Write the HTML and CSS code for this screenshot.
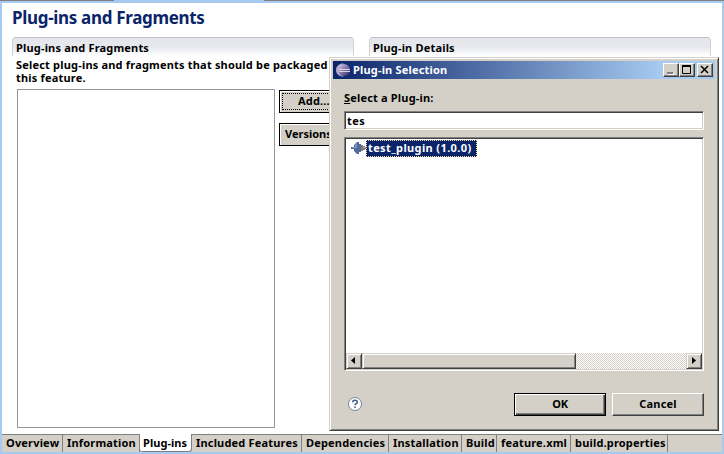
FILE: index.html
```html
<!DOCTYPE html>
<html lang="en">
<head>
<meta charset="utf-8">
<title>Plug-ins and Fragments</title>
<link rel="stylesheet" href="styles.css">
</head>
<body>
<div class="editor">
  <div class="top-edge"></div>
  <h1><span>Plug-ins and Fragments</span></h1>
  <main class="columns">
    <section class="left">
      <h2><span>Plug-ins and Fragments</span></h2>
      <p>Select plug-ins and fragments that should be packaged<br>this feature.</p>
      <div class="work">
        <div class="plugin-list"></div>
        <div class="actions">
          <button class="action focused"><span>Add...</span></button>
          <button class="action versions"><span>Versions...</span></button>
        </div>
      </div>
    </section>
    <section class="right"><h2><span class="details">Plug-in Details</span></h2></section>
  </main>
  <nav class="tabs">
    <div class="tab t1"><span>Overview</span></div>
    <div class="tab t2"><span>Information</span></div>
    <div class="tab t3 active"><span>Plug-ins</span></div>
    <div class="tab t4"><span>Included Features</span></div>
    <div class="tab t5"><span>Dependencies</span></div>
    <div class="tab t6"><span>Installation</span></div>
    <div class="tab t7"><span>Build</span></div>
    <div class="tab t8"><span>feature.xml</span></div>
    <div class="tab t9"><span>build.properties</span></div>
  </nav>
</div>
<div class="dialog">
  <header class="titlebar">
    <svg class="logo" width="16" height="16" viewBox="0 0 16 16">
      <defs><linearGradient id="orb" x1="0" y1="0" x2="1" y2="1"><stop offset="0" stop-color="#e0d9ed"/><stop offset=".4" stop-color="#9487b7"/><stop offset="1" stop-color="#302364"/></linearGradient></defs>
      <path d="M9 1.5C5 1 1 3.5 1 8s4 7 8 6.500C6 13 4 11 4 8s2-5 5-6.500Z" fill="#b7a8d2"/>
      <circle cx="9" cy="8" r="6" fill="url(#orb)"/>
      <path d="M4 7.500h11M4 9.500h11" stroke="#d9d3e8"/>
    </svg>
    <span class="title">Plug-in Selection</span>
    <div class="window-buttons">
      <span class="winbtn"><svg width="15" height="14"><path d="M4 9h6v2H4z" fill="#808080"/><path d="M5 11.500h6v-1.500" fill="none" stroke="#fff"/></svg></span>
      <span class="winbtn"><svg width="15" height="14"><path d="M3.500 3v7.500h8V3" fill="none" stroke="#000"/><path d="M3 3h9" stroke="#000" stroke-width="2"/></svg></span>
      <span class="winbtn close"><svg width="15" height="14"><path d="M4 3l7 7M11 3l-7 7" stroke="#000" stroke-width="1.500"/></svg></span>
    </div>
  </header>
  <div class="dialog-body">
    <div class="prompt"><span><u>S</u>elect a Plug-in:</span></div>
    <div class="field"><span>tes</span></div>
    <div class="results">
      <div class="result">
        <svg width="17" height="14" viewBox="0 0 17 14"><path d="M1 6h3V4l3-3h2v2h2v8H9v2H7L4 10V8H1Z" fill="#4f6b9b"/><path d="M2 6h3V4l2-2v5H2" fill="#7894bd"/><path d="M11 4h2v1h2v1h2v2h-2v1h-2v1h-2Z" fill="#827d70"/><path d="M13 6h3v1h-3z" fill="#bdad82"/></svg>
        <div class="selected"><span>test_plugin (1.0.0)</span></div>
      </div>
      <div class="scrollbar">
        <span class="arrow"><svg width="13" height="13"><path d="M8 2v7L4 5.500Z"/></svg></span>
        <span class="thumb"></span><span class="track"></span>
        <span class="arrow"><svg width="13" height="13"><path d="M5 2v7l4-3.500Z"/></svg></span>
      </div>
    </div>
    <footer>
      <svg class="help" width="16" height="16" viewBox="0 0 16 16"><circle cx="8" cy="8" r="6.500" fill="#fff" stroke="#7183a4"/><path d="M5.700 6.300C5.700 3.500 10.300 3.500 10.300 6.200 10.300 7.700 8 7.500 8 9.300M8 10.400v1.600" fill="none" stroke="#405784" stroke-width="1.500"/></svg>
      <button class="choice ok"><span>OK</span></button>
      <button class="choice cancel"><span>Cancel</span></button>
    </footer>
  </div>
</div>
</body>
</html>
```
FILE: styles.css
```css
* { box-sizing: border-box; }
body { margin: 0; width: 724px; height: 454px; overflow: hidden; position: relative; font: bold 11px/13px "Noto Sans", sans-serif; letter-spacing: .18px; color: #000; }
span { white-space: nowrap; }
button { font: inherit; letter-spacing: inherit; color: inherit; border-radius: 0; padding: 0; }
.editor { height: 454px; border: solid #a6caf0; border-width: 0 2px 2px; background: #fff; display: flex; flex-direction: column; }
.top-edge { height: 3px; flex: none; border-bottom: 2px solid #a6caf0; background: linear-gradient(90deg, #808080 114px, #a6caf0 114px 264px, #808080 264px); margin: 0 -2px; }
h1 { margin: 0; height: 34px; padding: 5px 0 0 10px; font-size: 17px; line-height: 20px; letter-spacing: -.32px; color: #0a246a; }
.columns { display: flex; gap: 15px; padding-left: 10px; height: 397px; }
.left, .right { width: 342px; }
h2 { margin: 0; height: 19px; border: 1px solid #d0d2d6; border-top-color: #bfc1c5; border-bottom: 0; border-radius: 4px 4px 0 0; background: linear-gradient(#e5e7ed 45%, #fff); padding: 2px 0 0 3px; font-size: 11px; line-height: 15px; }
p { margin: 2px 0 0 4px; height: 31px; line-height: 13px; white-space: nowrap; letter-spacing: .19px; }
.work { display: flex; gap: 4px; padding-left: 5px; }
.plugin-list { width: 258px; height: 339px; border: 1px solid #969696; }
.actions { display: flex; flex-direction: column; gap: 10px; padding-top: 1px; }
.action { width: 72px; height: 23px; border: 1px solid #000; background: #d4d0c8; box-shadow: inset 1px 1px #fff; text-align: left; padding: 0 0 2px 5px; }
.focused { outline: 1px dotted #000; outline-offset: -4px; padding-left: 18px; }
.versions { letter-spacing: 0; }
.tabs { display: flex; height: 18px; background: #d4d0c8; border-top: 1px solid #808080; }
.tab { border-right: 1px solid #808080; padding-left: 4px; line-height: 16px; }
.active { background: #fff; margin-top: -1px; height: 18px; line-height: 18px; border-bottom: 1px solid #808080; border-radius: 0 0 3px 3px; letter-spacing: .05px; }
.t1 { width: 61px } .t2 { width: 77px } .t3 { width: 52px; padding-left: 3px } .t4 { width: 110px } .t5 { width: 87px } .t6 { width: 73px } .t7 { width: 35px } .t8 { width: 74px } .t9 { width: 97px }
.dialog { position: absolute; left: 329px; top: 57px; width: 390px; height: 374px; background: #d4d0c8; border: 1px solid #d4d0c8; border-right-color: #404040; border-bottom-color: #404040; box-shadow: inset 1px 1px #fff, inset -1px -1px #808080; padding: 3px; }
.titlebar { height: 18px; display: flex; align-items: center; padding: 0 2px; background: linear-gradient(90deg, #0a246a, #a6caf0 86%); color: #fff; }
.title { margin: -2px 0 0 2px; }
.window-buttons { display: flex; margin-left: auto; }
.winbtn { width: 16px; height: 14px; background: #d4d0c8; border: 1px solid #fff; border-right-color: #404040; border-bottom-color: #404040; box-shadow: inset -1px -1px #808080; }
.winbtn svg { display: block; margin: -1px; }
.close { margin-left: 2px; }
.dialog-body { padding: 12px 11px; }
.prompt { height: 20px; line-height: 14px; }
.field, .results { border: 1px solid #808080; border-right-color: #fff; border-bottom-color: #fff; background: #fff; box-shadow: inset 1px 1px #404040, inset -1px -1px #d4d0c8; }
.field { height: 19px; padding: 1px 0 0 2px; line-height: 16px; letter-spacing: .4px; }
.results { height: 234px; margin-top: 7px; padding: 1px; display: flex; flex-direction: column; justify-content: space-between; }
.result { display: flex; padding-left: 4px; }
.result svg { margin-top: 2px; }
.selected { width: 111px; height: 17px; margin: 1px 0 0 -1px; background: #0a246a; outline: 1px dotted #f5db95; outline-offset: -1px; color: #fff; padding-left: 2px; line-height: 15px; letter-spacing: .38px; }
.scrollbar { display: flex; height: 16px; }
.arrow, .thumb { width: 16px; height: 16px; background: #d4d0c8; border: 1px solid #d4d0c8; border-right-color: #404040; border-bottom-color: #404040; box-shadow: inset 1px 1px #fff, inset -1px -1px #808080; }
.arrow svg { display: block; margin: 1px 0; }
.thumb { width: 214px; }
.track { flex: 1; background: repeating-conic-gradient(#d4d0c8 0 25%, #fff 0 50%) 0 0/2px 2px; }
footer { display: flex; padding-top: 22px; }
.help { margin: 3px 0 0 3px; }
.choice { height: 23px; width: 92px; border: 1px solid #fff; border-right-color: #404040; border-bottom-color: #404040; background: #d4d0c8; box-shadow: inset -1px -1px #808080; padding-bottom: 2px; }
.ok { margin-left: auto; border-color: #000; box-shadow: inset 1px 1px #fff, inset -1px -1px #404040, inset -2px -2px #808080; letter-spacing: -.2px; }
.cancel { margin-left: 6px; }
```
